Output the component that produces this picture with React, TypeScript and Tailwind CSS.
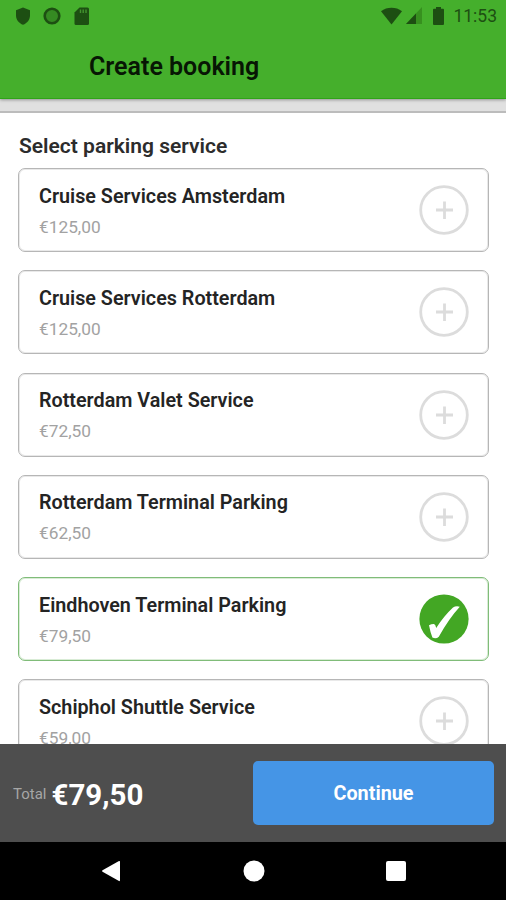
import React, { useState } from 'react';
import clsx from 'clsx';

interface ParkingService {
  id: number;
  name: string;
  price: string;
}

const services: ParkingService[] = [
  { id: 1, name: 'Cruise Services Amsterdam', price: '€125,00' },
  { id: 2, name: 'Cruise Services Rotterdam', price: '€125,00' },
  { id: 3, name: 'Rotterdam Valet Service', price: '€72,50' },
  { id: 4, name: 'Rotterdam Terminal Parking', price: '€62,50' },
  { id: 5, name: 'Eindhoven Terminal Parking', price: '€79,50' },
  { id: 6, name: 'Schiphol Shuttle Service', price: '€59,00' },
];

const StatusBar: React.FC = () => (
  <div className="flex h-[31px] items-center justify-between pl-[15px] pr-[9px] text-[#1d4f12]">
    <div className="flex items-center">
      <svg className="h-[18px] w-4" viewBox="0 0 16 18" fill="currentColor">
        <path d="M8 0.5 L15 3.2 V8.5 C15 12.8 12 16.3 8 17.8 C4 16.3 1 12.8 1 8.5 V3.2 Z" />
      </svg>
      <svg className="ml-3 h-[18px] w-[18px]" viewBox="0 0 18 18">
        <circle cx="9" cy="9" r="7.3" fill="#358a22" stroke="currentColor" strokeWidth="2.6" />
      </svg>
      <svg className="ml-[13px] h-[18px] w-[15px]" viewBox="0 0 15 18">
        <path d="M5.5 0.5 H13.5 Q15 0.5 15 2 V16.5 Q15 18 13.5 18 H2 Q0.5 18 0.5 16.5 V5.5 Z" fill="currentColor" />
        <path d="M6.5 2.5 V6 M9.2 2.5 V6 M12 2.5 V6" stroke="#43932f" strokeWidth="1.4" />
      </svg>
    </div>
    <div className="flex items-center">
      <svg className="h-[18px] w-[21px]" viewBox="0 0 21 18" fill="currentColor">
        <path d="M0 4.2 C6 -0.4 15 -0.4 21 4.2 L10.5 17.6 Z" />
      </svg>
      <svg className="ml-1 h-[17px] w-4" viewBox="0 0 16 17">
        <path d="M16 0 V17 H0 Z" fill="#37901f" />
        <path d="M10 6.4 V17 H0 Z" fill="currentColor" />
      </svg>
      <svg className="ml-[11px] h-[18px] w-[11px]" viewBox="0 0 11 18" fill="currentColor">
        <path d="M3 0 H8 V1.8 H10 Q11 1.8 11 2.8 V17 Q11 18 10 18 H1 Q0 18 0 17 V2.8 Q0 1.8 1 1.8 H3 Z" />
      </svg>
      <span className="ml-[9px] text-[17.5px] leading-5">11:53</span>
    </div>
  </div>
);

const AddIcon: React.FC = () => (
  <svg className="h-[50px] w-[50px]" viewBox="0 0 50 50" fill="none" stroke="#dcdcdc">
    <circle cx="25" cy="25" r="23.3" strokeWidth="2.8" />
    <path d="M25.5 16.5 V34 M17 25 H34" strokeWidth="2.8" />
  </svg>
);

const CheckIcon: React.FC = () => (
  <svg className="h-[50px] w-[50px]" viewBox="0 0 50 50">
    <circle cx="25" cy="25" r="24.6" fill="#43a724" />
    <path
      d="M10 31.2 Q12.5 29.8 15 29.9 Q16.6 30.4 17.2 34 Q25 22 34 13.6 Q37 11.6 40.8 12.8 Q30 24.5 19.8 42.8 Q17 45.4 13.4 43.6 Q11.3 38 10 31.2 Z"
      fill="#fff"
    />
  </svg>
);

const App: React.FC = () => {
  const [selectedId, setSelectedId] = useState(5);
  const selected = services.find((s) => s.id === selectedId);

  return (
    <div className="flex h-[900px] w-[506px] flex-col overflow-hidden bg-white font-['Roboto',sans-serif]">
      <header className="relative h-[99px] shrink-0 border-b border-[#2fa418] bg-[#45af2c] shadow-[0_1px_3px_rgba(0,0,0,0.35)]">
        <StatusBar />
        <h1 className="mt-[21px] ml-[89px] text-[25px] leading-[30px] font-semibold text-[#071604]">Create booking</h1>
      </header>
      <div className="h-[14px] shrink-0 border-b-2 border-[#bcbcbc] bg-[#e0e0e0]" />

      <main className="min-h-0 flex-1 overflow-hidden pr-[17px] pl-[18px]">
        <h2 className="mt-5 pl-px text-[21px] leading-[26px] font-semibold text-[#2c2c2c]">Select parking service</h2>
        <div className="mt-[9px] flex flex-col gap-[18.25px]">
          {services.map((service) => (
            <button
              key={service.id}
              onClick={() => setSelectedId(service.id)}
              className={clsx(
                'flex h-[84px] shrink-0 items-center justify-between rounded-[7px] border pr-[19px] pl-5 text-left',
                service.id === selectedId
                  ? 'border-[#80bc79] shadow-[inset_0_0_0_1px_#d9ecd6]'
                  : 'border-[#b6b6b6] shadow-[inset_0_0_0_1px_#e9e9e9]'
              )}
            >
              <div className="pt-px">
                <div className="text-[19.75px] leading-6 font-semibold text-[#242424]">{service.name}</div>
                <div className="mt-2 text-[17.3px] leading-5 text-[#a2a2a2]">{service.price}</div>
              </div>
              {service.id === selectedId ? <CheckIcon /> : <AddIcon />}
            </button>
          ))}
        </div>
      </main>

      <footer className="flex h-[98px] shrink-0 items-center justify-between bg-[#4e4e4e] pr-3 pl-[13px]">
        <div className="flex items-center">
          <span className="mt-0.5 text-[15px] text-[#a6a6a6]">Total</span>
          <span className="mt-[3px] ml-[5px] text-[29.5px] leading-9 font-bold text-white">{selected?.price}</span>
        </div>
        <button className="h-16 w-[241px] rounded-[5px] bg-[#4595e6] pt-0.5 text-[19.8px] font-bold text-white">
          Continue
        </button>
      </footer>

      <nav className="flex h-[58px] shrink-0 items-center justify-between bg-black pr-[100px] pl-[101px]">
        <svg className="h-[22px] w-5" viewBox="0 0 20 22" fill="#fff">
          <path d="M18 1 Q19 0.5 19 2 V20 Q19 21.5 18 21 L1.5 11.8 Q0.5 11 1.5 10.2 Z" />
        </svg>
        <svg className="h-[22px] w-[22px]" viewBox="0 0 22 22" fill="#fff">
          <circle cx="11" cy="11" r="10.5" />
        </svg>
        <div className="h-5 w-5 rounded-[2px] bg-white" />
      </nav>
    </div>
  );
};

export default App;
